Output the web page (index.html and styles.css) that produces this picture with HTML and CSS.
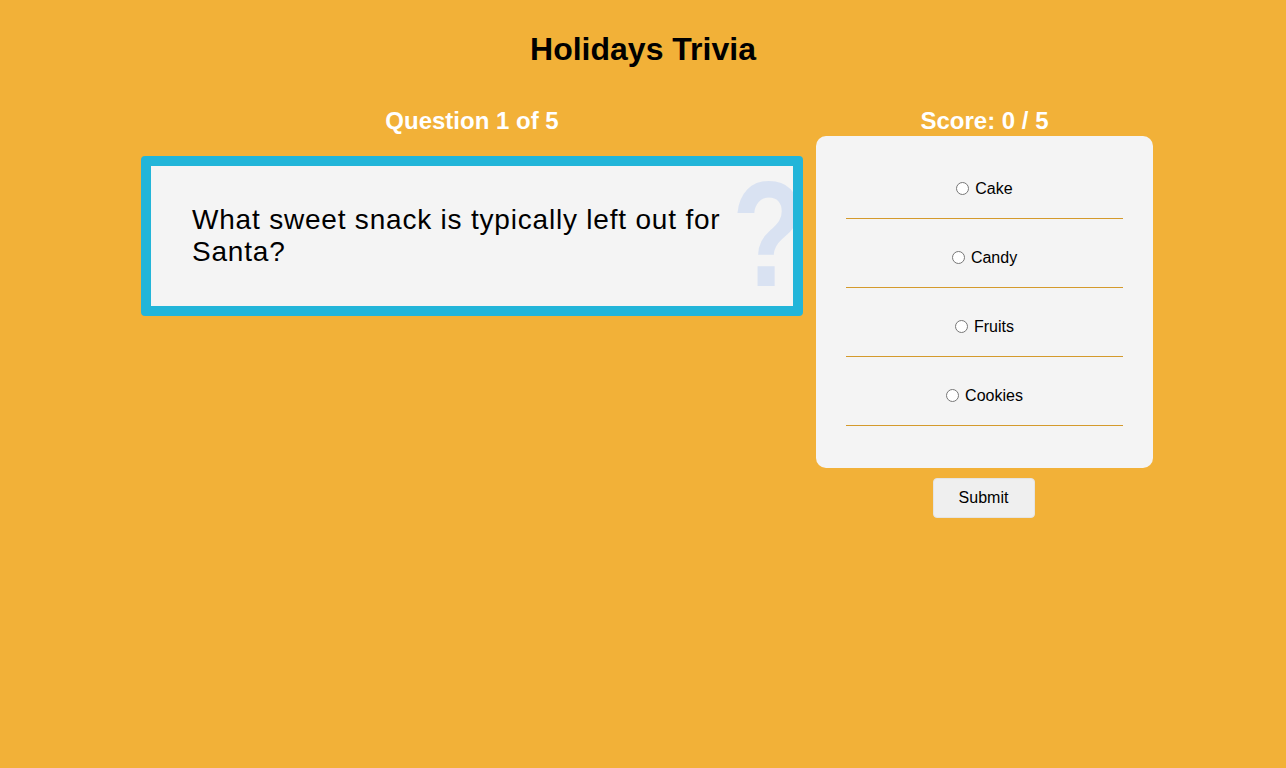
FILE: index.html
```html
<!DOCTYPE html>
<html>
<head>
<meta charset="utf-8">
<title>Holidays Trivia</title>
<link rel="stylesheet" href="styles.css">
</head>
<body>
<h1 class="title">Holidays Trivia</h1>
<main class="layout">
  <section class="left">
    <h2 class="heading">Question 1 of 5</h2>
    <div class="question-box">
      <p class="question-text">What sweet snack is typically left out for Santa?</p>
      <span class="qmark">?</span>
    </div>
  </section>
  <section class="right">
    <h2 class="heading">Score: 0 / 5</h2>
    <form class="card">
      <label class="option"><input type="radio" name="a"> Cake</label>
      <label class="option"><input type="radio" name="a"> Candy</label>
      <label class="option"><input type="radio" name="a"> Fruits</label>
      <label class="option"><input type="radio" name="a"> Cookies</label>
    </form>
    <button class="submit" type="button">Submit</button>
  </section>
</main>
</body>
</html>
```
FILE: styles.css
```css
html, body {
  margin: 0;
  padding: 0;
}
body {
  background: #f2b138;
  font-family: "Liberation Sans", Arial, sans-serif;
  color: #000;
  min-height: 768px;
}
.title {
  margin: 0;
  padding-top: 31px;
  font-size: 32px;
  line-height: 37px;
  text-align: center;
  font-weight: bold;
}
.layout {
  display: flex;
  gap: 13px;
  margin-left: 141px;
  margin-top: 39px;
  width: 1012px;
  align-items: flex-start;
}
.left {
  width: 662px;
}
.right {
  width: 337px;
  display: flex;
  flex-direction: column;
  align-items: center;
}
.heading {
  margin: 0;
  font-size: 24px;
  line-height: 28px;
  font-weight: bold;
  color: #fff;
  text-align: center;
  width: 100%;
}
.question-box {
  position: relative;
  overflow: hidden;
  margin-top: 21px;
  border: 10px solid #22b5d9;
  border-radius: 4px;
  background: #f4f4f4;
  height: 140px;
  box-sizing: content-box;
}
.question-text {
  position: relative;
  z-index: 1;
  margin: 0;
  padding: 38px 60px 0 41px;
  font-size: 28px;
  line-height: 32px;
  letter-spacing: 0.8px;
}
.qmark {
  position: absolute;
  left: 581px;
  top: -7px;
  font-size: 150px;
  line-height: 150px;
  font-weight: bold;
  color: #d9e2f2;
  transform: scaleX(0.8);
  transform-origin: left top;
}
.card {
  margin: 1px 0 0;
  width: 337px;
  box-sizing: border-box;
  background: #f4f4f4;
  border-radius: 10px;
  padding: 14px 30px 42px;
  display: flex;
  flex-direction: column;
}
.option {
  display: flex;
  justify-content: center;
  align-items: center;
  gap: 4px;
  height: 69px;
  border-bottom: 1px solid #d49a2c;
  font-size: 16px;
  padding-top: 9px;
  box-sizing: border-box;
}
.option input {
  margin: 0 2px 0 0;
  width: 13px;
  height: 13px;
}
.submit {
  margin-top: 10px;
  margin-right: 2px;
  width: 102px;
  height: 40px;
  background: #efefef;
  border: 1px solid #e4e4e4;
  border-radius: 4px;
  font-family: "Liberation Sans", Arial, sans-serif;
  font-size: 16px;
  color: #000;
}
```
